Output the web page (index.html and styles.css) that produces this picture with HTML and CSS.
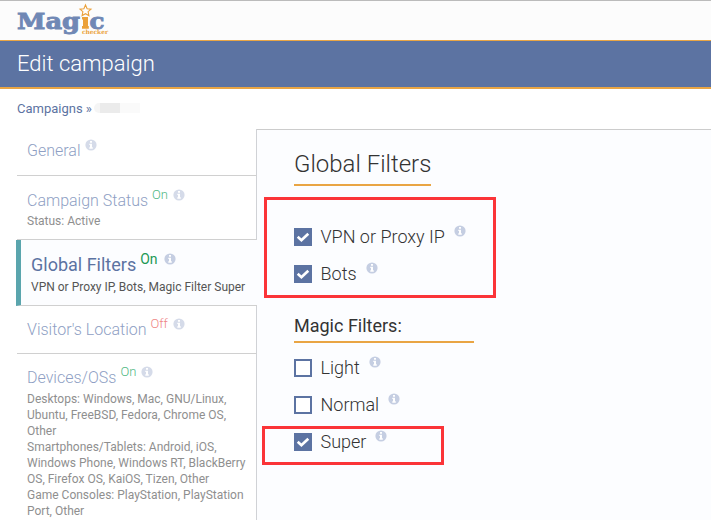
FILE: index.html
```html
<!DOCTYPE html>
<html lang="en">
<head>
<meta charset="utf-8">
<title>Edit campaign</title>
<link rel="stylesheet" href="styles.css">
</head>
<body>
<svg class="defs" aria-hidden="true">
  <symbol id="info" viewBox="0 0 12 12">
    <circle cx="6" cy="6" r="5.6" fill="currentColor"/>
    <path d="M5 2h2v1.7H5zM4.3 4.7H7v3.6h.8v1.4H4.3V8.300H5V6h-.7z" fill="#fff"/>
  </symbol>
  <symbol id="check" viewBox="0 0 18 18">
    <path d="M3.700 8.800L7.400 12.200L14.300 5.700" fill="none" stroke="#fff" stroke-width="2.700"/>
  </symbol>
</svg>
<header class="top">
  <svg class="logo" viewBox="0 0 96 39" role="img" aria-label="Magic checker">
    <g class="logo-word">
      <text x="1" y="27.500" textLength="63" lengthAdjust="spacingAndGlyphs">Mag</text>
      <text x="73.500" y="27.500" textLength="15" lengthAdjust="spacingAndGlyphs">c</text>
    </g>
    <path d="M66 16h6v9h.8v2.800h-6.800V25h1v-6.500h-1z" fill="#eba13a"/>
    <path d="M69.500 4l1.600 3.700 3.900.4-2.900 2.600.8 3.900-3.400-1.900-3.400 1.900.8-3.900-2.900-2.600 3.900-.4z" fill="#fff" stroke="#eba13a" stroke-width="1.100"/>
    <text class="logo-sub" x="66" y="33.400" textLength="26" lengthAdjust="spacingAndGlyphs">checker</text>
  </svg>
</header>
<div class="title">Edit campaign</div>
<div class="crumbs"><span class="crumb">Campaigns</span> <span>»</span><span class="redacted"></span></div>
<div class="layout">
  <nav class="tabs">
    <div class="tab general">
      <div class="name">General<svg class="info"><use href="#info"/></svg></div>
    </div>
    <div class="tab status">
      <div class="name">Campaign Status<span class="flag on">On</span><svg class="info"><use href="#info"/></svg></div>
      <div class="desc">Status: Active</div>
    </div>
    <div class="tab active">
      <div class="name">Global Filters<span class="flag on">On</span><svg class="info"><use href="#info"/></svg></div>
      <div class="desc">VPN or Proxy IP, Bots, Magic Filter Super</div>
    </div>
    <div class="tab location">
      <div class="name">Visitor's Location<span class="flag off">Off</span><svg class="info"><use href="#info"/></svg></div>
    </div>
    <div class="tab devices">
      <div class="name">Devices/OSs<span class="flag on">On</span><svg class="info"><use href="#info"/></svg></div>
      <div class="desc">Desktops: Windows, Mac, GNU/Linux,<br>Ubuntu, FreeBSD, Fedora, Chrome OS,<br>Other<br>Smartphones/Tablets: Android, iOS,<br>Windows Phone, Windows RT, BlackBerry<br>OS, Firefox OS, KaiOS, Tizen, Other<br>Game Consoles: PlayStation, PlayStation<br>Port, Other</div>
    </div>
  </nav>
  <main class="panel">
    <h1>Global Filters</h1>
    <div class="options first">
      <div class="option"><span class="box checked"><svg><use href="#check"/></svg></span><span>VPN or Proxy IP</span><svg class="info"><use href="#info"/></svg></div>
      <div class="option"><span class="box checked"><svg><use href="#check"/></svg></span><span>Bots</span><svg class="info"><use href="#info"/></svg></div>
    </div>
    <h2>Magic Filters:</h2>
    <div class="options">
      <div class="option"><span class="box"></span><span>Light</span><svg class="info"><use href="#info"/></svg></div>
      <div class="option"><span class="box"></span><span>Normal</span><svg class="info"><use href="#info"/></svg></div>
      <div class="option"><span class="box checked"><svg><use href="#check"/></svg></span><span>Super</span><svg class="info"><use href="#info"/></svg></div>
    </div>
  </main>
</div>
<div class="mark mark-global"></div>
<div class="mark mark-super"></div>
</body>
</html>
```
FILE: styles.css
```css
* { box-sizing: border-box; }
body {
  margin: 0;
  height: 520px;
  overflow: hidden;
  position: relative;
  background: #fff;
  color: #333;
  font-family: Roboto, "Liberation Sans", sans-serif;
}
.defs { position: absolute; width: 0; height: 0; }
.top {
  height: 41px;
  padding-left: 16px;
  background: #fcfcfc;
  border-top: 1px solid #bbb;
  border-bottom: 1px solid #e9a544;
}
.logo { display: block; width: 96px; height: 39px; overflow: visible; }
.logo-word {
  font: bold 23px "DejaVu Serif", serif;
  fill: #7088b5;
  stroke: #7088b5;
  stroke-width: .9px;
}
.logo-sub { font: bold 6px "DejaVu Serif", serif; fill: #eba13a; }
.title {
  height: 48px;
  padding-left: 17px;
  background: #5c73a2;
  border-bottom: 2px solid #e9a544;
  color: #fff;
  font-size: 22px;
  font-weight: 300;
  line-height: 45px;
}
.crumbs {
  display: flex;
  align-items: center;
  gap: 3px;
  height: 40px;
  padding: 0 0 2px 17px;
  font-size: 13px;
  color: #5c73a2;
}
.redacted {
  width: 46px;
  height: 10px;
  margin-left: -1px;
  border-radius: 5px 0 0 5px;
  background: linear-gradient(90deg, #f5f5f5 6px, #ebebeb 6px 26px, #fafafa 26px);
}
.layout { display: flex; height: 391px; }
.tabs { width: 257px; padding-left: 16px; }
.tab {
  margin-left: 1px;
  padding-left: 10px;
  border-right: 1px solid #d0d2d6;
  border-bottom: 1px solid #d0d0d0;
}
.name {
  display: flex;
  align-items: flex-start;
  height: 24px;
  color: #8f9fc4;
  font-size: 16px;
  font-weight: 300;
  line-height: 23px;
}
.flag { margin-left: 4px; font-size: 13px; line-height: 12px; }
.on { color: #4fb883; }
.off { color: #ef8585; }
.info { width: 12px; height: 12px; flex: none; margin-left: 5px; color: #d5dbe9; }
.desc { color: #8f8f8f; font-size: 12px; line-height: 16px; }
.general { height: 47px; padding-top: 10px; }
.general .info { margin-left: 4px; }
.status { height: 64px; padding-top: 13px; }
.active {
  height: 66px;
  margin-left: 0;
  padding-top: 13px;
  padding-left: 10px;
  border-left: 5px solid #5aa5ad;
  border-right: 0;
  background: #fcfdff;
}
.active .name { font-size: 18px; font-weight: 400; color: #5c73a2; line-height: 24px; }
.active .on { color: #229955; font-size: 14px; }
.active .info { margin-left: 6px; color: #c5cee2; }
.active .desc { color: #555; margin-top: 2px; }
.location { height: 48px; padding-top: 12px; }
.devices { height: 167px; padding-top: 12px; border-bottom: 0; }
.devices .desc { margin-top: 1px; }
.panel {
  flex: 1;
  padding: 19px 0 0 37px;
  background: #fcfdff;
  border-top: 1px solid #ccc;
}
h1, h2 { margin: 0; border-bottom: 2px solid #e9a544; }
h1 { width: 137px; height: 37px; font-size: 24px; font-weight: 300; line-height: 30px; white-space: nowrap; }
h2 { width: 180px; height: 30px; margin-top: 21px; margin-bottom: 6px; font-size: 18px; font-weight: 400; line-height: 26px; }
.options.first { padding-top: 32px; }
.option { display: flex; align-items: center; height: 37px; font-size: 18px; font-weight: 300; }
.box { width: 18px; height: 18px; margin-right: 8.5px; border: 2px solid #5c73a2; background: #fff; }
.checked { border: 0; background: #5c73a2; }
.box svg { display: block; width: 18px; height: 18px; }
.option .info { margin: -11px 0 0 9px; color: #c5cee2; }
.mark { position: absolute; border: 3px solid #fb3438; }
.mark-global { left: 264px; top: 197px; width: 232px; height: 101px; }
.mark-super { left: 262px; top: 426px; width: 182px; height: 39px; }
```
